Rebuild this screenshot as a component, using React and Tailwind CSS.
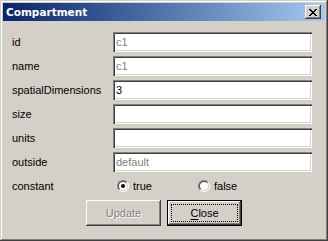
import React from 'react';

const FONT = "font-['Liberation_Sans',Arial,sans-serif]";

const fields = [
    { label: 'id', value: 'c1', muted: true },
    { label: 'name', value: 'c1', muted: true },
    { label: 'spatialDimensions', value: '3' },
    { label: 'size', value: '' },
    { label: 'units', value: '' },
    { label: 'outside', value: 'default', muted: true },
];

const sunken =
    'shadow-[inset_1px_1px_#808080,inset_2px_2px_#404040,inset_-1px_-1px_#ffffff,inset_-2px_-2px_#d4d0c8]';
const raised =
    'shadow-[inset_-1px_-1px_#404040,inset_1px_1px_#ffffff,inset_-2px_-2px_#808080,inset_2px_2px_#d4d0c8]';

const Radio = ({ checked, label }) => (
    <label className="flex items-center gap-[4px] text-[11px] text-black">
        <span className="w-[12px] h-[12px] rounded-full border border-t-[#808080] border-l-[#808080] border-b-white border-r-white">
            <span className="flex items-center justify-center w-[10px] h-[10px] rounded-full bg-white border border-t-[#404040] border-l-[#404040] border-b-[#d4d0c8] border-r-[#d4d0c8]">
                {checked && <span className="w-[4px] h-[4px] rounded-full bg-black" />}
            </span>
        </span>
        {label}
    </label>
);

const Compartment = () => {
    return (
        <div className={`w-[328px] h-[241px] bg-[#d4d0c8] p-[3px] ${FONT} shadow-[inset_-1px_-1px_#404040,inset_1px_1px_#d4d0c8,inset_-2px_-2px_#808080,inset_2px_2px_#ffffff]`}>
            {/* title bar */}
            <div className="h-[18px] flex items-center justify-between pl-[3px] pr-[4px] bg-gradient-to-r from-[#0a246a] to-[#a6caf0]">
                <span className="font-['DejaVu_Sans',sans-serif] font-bold text-[10.5px] text-white leading-none">
                    Compartment
                </span>
                <button className={`w-[16px] h-[14px] bg-[#d4d0c8] flex items-center justify-center ${raised}`}>
                    <svg width="8" height="7" viewBox="0 0 8 7" shapeRendering="crispEdges">
                        <path d="M0 0h2v1H0zM6 0h2v1H6zM1 1h2v1H1zM5 1h2v1H5zM2 2h4v1H2zM3 3h2v1H3zM2 4h4v1H2zM1 5h2v1H1zM5 5h2v1H5zM0 6h2v1H0zM6 6h2v1H6z" fill="#000" />
                    </svg>
                </button>
            </div>

            <div className="pt-[11px] pl-[9px] flex flex-col gap-[4px]">
                {fields.map((f) => (
                    <div key={f.label} className="flex items-center h-[20px]">
                        <span className="w-[101px] text-[11px] text-black">{f.label}</span>
                        <div className={`w-[199px] h-[20px] bg-white flex items-center pl-[3px] text-[11px] ${sunken} ${f.muted ? 'text-[#808080]' : 'text-black'}`}>
                            {f.value}
                        </div>
                    </div>
                ))}

                <div className="flex items-center h-[20px]">
                    <span className="w-[105px] text-[11px] text-black">constant</span>
                    <div className="w-[81px]">
                        <Radio checked label="true" />
                    </div>
                    <Radio label="false" />
                </div>
            </div>

            <div className="flex justify-center gap-[6px] mt-[4px]">
                <button className={`w-[75px] h-[26px] text-[11px] text-[#808080] [text-shadow:1px_1px_0_#ffffff] ${raised}`}>
                    Update
                </button>
                <button className="w-[75px] h-[26px] border border-black">
                    <span className={`w-full h-full flex items-center justify-center p-[3px] ${raised}`}>
                        <span className="w-full h-full flex items-center justify-center border border-dotted border-black text-[11px] text-black">
                            <span className="underline underline-offset-2">C</span>lose
                        </span>
                    </span>
                </button>
            </div>
        </div>
    );
};

export default function App() {
    return <Compartment />;
}
